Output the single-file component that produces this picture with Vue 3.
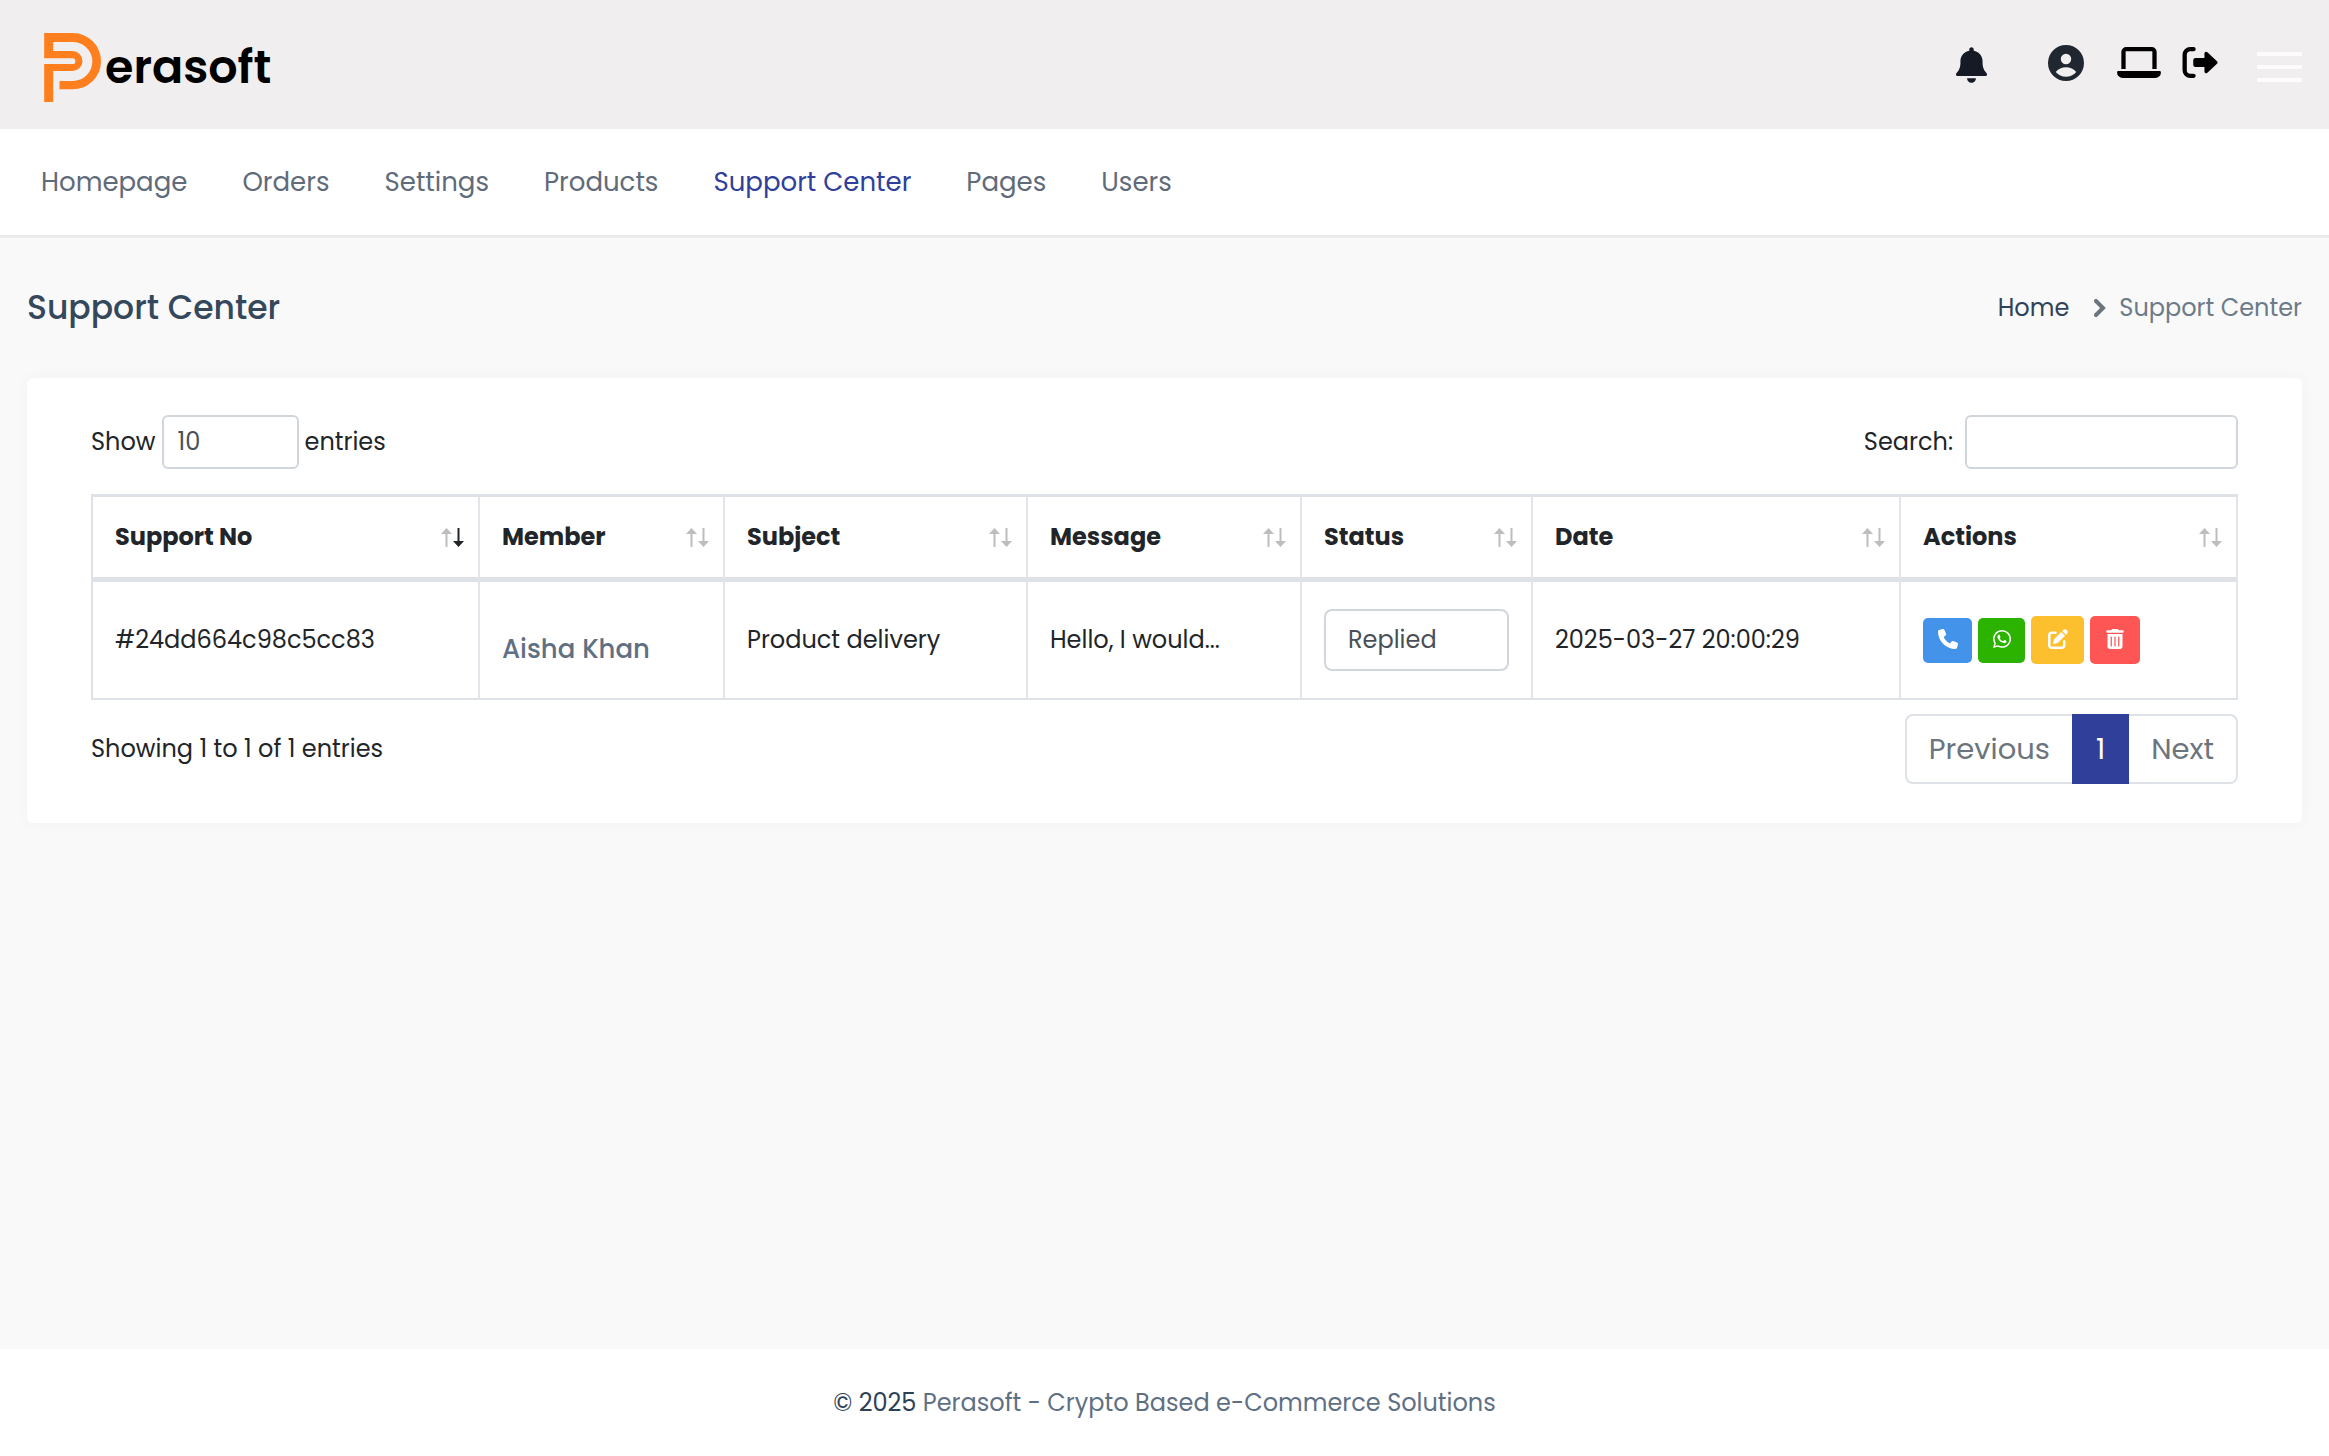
<script setup>
import { ref } from 'vue'

const navItems = ['Homepage', 'Orders', 'Settings', 'Products', 'Support Center', 'Pages', 'Users']
const activeNav = 'Support Center'

const columns = [
  { label: 'Support No', width: 387, sorted: true },
  { label: 'Member', width: 245 },
  { label: 'Subject', width: 303 },
  { label: 'Message', width: 274 },
  { label: 'Status', width: 231 },
  { label: 'Date', width: 368 },
  { label: 'Actions', width: 337 }
]

const tickets = ref([
  {
    no: '#24dd664c98c5cc83',
    member: 'Aisha Khan',
    subject: 'Product delivery',
    message: 'Hello, I would...',
    status: 'Replied',
    date: '2025-03-27 20:00:29'
  }
])

const pageSize = ref('10')
const search = ref('')
</script>

<template>
  <div class="page">
    <header class="topbar">
      <a class="logo" href="#" aria-label="Perasoft">
        <svg class="logo-mark" viewBox="74 69 170 207" aria-hidden="true">
          <path d="M74 69H160A84.500 84.500 0 0 1 160 238H120V213H160A58.500 58.500 0 0 0 160 96H101V123H159A30 30 0 0 1 159 183H101V276H74V162H159A8.500 8.500 0 0 0 159 145H74Z" />
        </svg>
        <span class="logo-text">erasoft</span>
      </a>
      <div class="tools">
        <a class="tool bell" href="#" aria-label="Notifications">
          <svg width="31" height="36" viewBox="0 0 448 512"><path d="M224 0c-17.700 0-32 14.300-32 32V49.900C119.500 61.400 64 124.200 64 200v33.400c0 45.400-15.500 89.500-43.800 124.900L5.300 377c-5.800 7.200-6.900 17.100-2.900 25.400S14.800 416 24 416H424c9.200 0 17.600-5.300 21.600-13.600s2.900-18.200-2.900-25.400l-14.900-18.600C399.500 322.900 384 278.800 384 233.400V200c0-75.800-55.500-138.600-128-150.100V32c0-17.700-14.300-32-32-32zM288 448H160c0 17 6.700 33.300 18.700 45.300s28.300 18.700 45.300 18.700s33.300-6.700 45.300-18.700s18.700-28.300 18.700-45.300z" /></svg>
        </a>
        <a class="tool user" href="#" aria-label="Account">
          <svg width="36" height="36" viewBox="2 2 20 20"><path fill-rule="evenodd" d="M12 2a10 10 0 1 0 0 20a10 10 0 1 0 0-20zM12 6.900a2.900 2.900 0 1 1 0 5.800a2.900 2.900 0 1 1 0-5.800zM6.300 17c1.200-1.800 3.500-2.700 5.700-2.700s4.500.9 5.700 2.700c-1.400 1.700-3.400 2.600-5.700 2.600s-4.300-.9-5.700-2.600z" /></svg>
        </a>
        <a class="tool laptop" href="#" aria-label="View site">
          <svg width="44" height="31" viewBox="0 0 133 94"><path d="M13 67V15A15 15 0 0 1 28 0H105A15 15 0 0 1 120 15V67H107V13H26V67ZM4 73H129Q133 73 133 77A17 17 0 0 1 116 94H17A17 17 0 0 1 0 77Q0 73 4 73Z" /></svg>
        </a>
        <a class="tool" href="#" aria-label="Sign out">
          <svg width="36" height="31" viewBox="0 0 107 94"><path d="M34 6.500H24A17 17 0 0 0 7 23.500V70.500A17 17 0 0 0 24 87.500H34" fill="none" stroke="currentColor" stroke-width="13" stroke-linecap="round" /><path d="M40 33H67V20Q68 11 76 16L105 43Q109 47 105 51L76 78Q68 83 67 74V61H40Q33 61 33 54V40Q33 33 40 33Z" /></svg>
        </a>
        <button class="menu" type="button" aria-label="Menu"><i></i><i></i><i></i></button>
      </div>
    </header>

    <nav class="mainnav">
      <a v-for="item in navItems" :key="item" href="#" :class="{ active: item === activeNav }">{{ item }}</a>
    </nav>

    <main>
      <div class="heading">
        <h1>Support Center</h1>
        <div class="crumbs">
          <a href="#">Home</a>
          <svg width="12" height="18" viewBox="0 0 12 18" aria-hidden="true"><path d="M2 2L9 9L2 16" /></svg>
          <span>Support Center</span>
        </div>
      </div>

      <section class="card">
        <div class="controls">
          <div class="field">
            <label for="size">Show</label>
            <select id="size" v-model="pageSize" class="size">
              <option>10</option>
              <option>25</option>
              <option>50</option>
            </select>
            <label for="size">entries</label>
          </div>
          <div class="field search">
            <label for="search">Search:</label>
            <input id="search" v-model="search" type="search" />
          </div>
        </div>

        <table>
          <colgroup>
            <col v-for="c in columns" :key="c.label" :style="{ width: c.width + 'px' }" />
          </colgroup>
          <thead>
            <tr>
              <th v-for="c in columns" :key="c.label" scope="col">
                <div class="th">
                  {{ c.label }}
                  <svg class="sort" :class="{ sorted: c.sorted }" width="23" height="19" viewBox="0 0 23 19" aria-hidden="true">
                    <path d="M0 6L5.500 0L11 6H6.500V19H4.500V6Z" />
                    <path class="down" d="M12 13H16.500V0H18.500V13H23L17.500 19Z" />
                  </svg>
                </div>
              </th>
            </tr>
          </thead>
          <tbody>
            <tr v-for="t in tickets" :key="t.no">
              <td>{{ t.no }}</td>
              <td><h2 class="member">{{ t.member }}</h2></td>
              <td>{{ t.subject }}</td>
              <td>{{ t.message }}</td>
              <td>
                <select v-model="t.status" class="status" aria-label="Status">
                  <option>Replied</option>
                  <option>Pending</option>
                </select>
              </td>
              <td>{{ t.date }}</td>
              <td>
                <div class="actions">
                  <button class="call" type="button" aria-label="Call">
                    <svg width="20" height="20" viewBox="0 0 512 512"><path d="M164.900 24.600c-7.700-18.600-28-28.500-47.400-23.200l-88 24C12.100 30.200 0 46 0 64C0 311.400 200.600 512 448 512c18 0 33.800-12.100 38.600-29.500l24-88c5.300-19.400-4.600-39.700-23.200-47.400l-96-40c-16.300-6.800-35.200-2.100-46.300 11.600L304.700 368C234.300 334.700 177.300 277.700 144 207.300L193.300 167c13.700-11.200 18.400-30 11.600-46.300l-40-96z" /></svg>
                  </button>
                  <button class="whatsapp" type="button" aria-label="WhatsApp">
                    <svg width="18" height="18" viewBox="0 32 448 448"><path d="M380.900 97.100C339 55.100 283.200 32 223.900 32c-122.400 0-222 99.600-222 222 0 39.100 10.200 77.300 29.600 111L0 480l117.700-30.900c32.400 17.700 68.900 27 106.100 27h.1c122.300 0 224.100-99.600 224.100-222 0-59.300-25.200-115-67.100-157zm-157 341.600c-33.200 0-65.700-8.900-94-25.700l-6.700-4-69.800 18.300L72 359.200l-4.400-7c-18.500-29.400-28.200-63.300-28.200-98.200 0-101.700 82.800-184.500 184.600-184.500 49.300 0 95.600 19.200 130.400 54.100 34.800 34.900 56.200 81.200 56.100 130.500 0 101.800-84.900 184.600-186.600 184.600zm101.200-138.200c-5.500-2.800-32.800-16.200-37.900-18-5.100-1.900-8.800-2.800-12.500 2.800-3.700 5.600-14.300 18-17.600 21.800-3.200 3.700-6.500 4.200-12 1.400-32.600-16.300-54-29.100-75.500-66-5.700-9.800 5.700-9.100 16.300-30.300 1.800-3.700.9-6.900-.5-9.700-1.400-2.800-12.500-30.100-17.100-41.200-4.500-10.800-9.100-9.300-12.500-9.500-3.200-.2-6.900-.2-10.600-.2-3.700 0-9.700 1.400-14.800 6.900-5.100 5.600-19.400 19-19.400 46.300 0 27.300 19.900 53.700 22.600 57.400 2.800 3.700 39.100 59.700 94.800 83.800 35.200 15.200 49 16.500 66.600 13.900 10.700-1.600 32.800-13.400 37.400-26.400 4.600-13 4.600-24.100 3.200-26.400-1.300-2.500-5-3.900-10.500-6.600z" /></svg>
                  </button>
                  <button class="edit" type="button" aria-label="Edit">
                    <svg width="20" height="20" viewBox="0 0 512 512"><path d="M471.600 21.700c-21.900-21.900-57.300-21.900-79.200 0L362.300 51.700l97.900 97.900 30.100-30.100c21.900-21.900 21.900-57.300 0-79.200L471.600 21.700zm-299.200 220c-6.100 6.100-10.800 13.600-13.500 21.900l-29.600 88.800c-2.900 8.600-.6 18.100 5.800 24.600s15.900 8.700 24.600 5.800l88.800-29.600c8.200-2.700 15.700-7.400 21.900-13.500L437.700 172.300 339.700 74.300 172.400 241.700zM96 64C43 64 0 107 0 160V416c0 53 43 96 96 96H352c53 0 96-43 96-96V320c0-17.700-14.300-32-32-32s-32 14.300-32 32v96c0 17.700-14.300 32-32 32H96c-17.700 0-32-14.300-32-32V160c0-17.700 14.300-32 32-32h96c17.700 0 32-14.300 32-32s-14.300-32-32-32H96z" /></svg>
                  </button>
                  <button class="delete" type="button" aria-label="Delete">
                    <svg width="18" height="20" viewBox="0 0 448 512"><path fill-rule="evenodd" d="M135.200 17.700L128 32H32C14.300 32 0 46.300 0 64S14.300 96 32 96H416c17.700 0 32-14.300 32-32s-14.300-32-32-32H320l-7.200-14.300C307.400 6.800 296.300 0 284.200 0H163.800c-12.100 0-23.200 6.800-28.600 17.700zM416 128H32V448c0 35.300 28.700 64 64 64H352c35.300 0 64-28.700 64-64V128zM144 208V432c0 8.800-7.200 16-16 16s-16-7.200-16-16V208c0-8.800 7.200-16 16-16s16 7.200 16 16zm96 0V432c0 8.800-7.200 16-16 16s-16-7.200-16-16V208c0-8.800 7.200-16 16-16s16 7.200 16 16zm96 0V432c0 8.800-7.200 16-16 16s-16-7.200-16-16V208c0-8.800 7.200-16 16-16s16 7.200 16 16z" /></svg>
                  </button>
                </div>
              </td>
            </tr>
          </tbody>
        </table>

        <div class="bottom">
          <p>Showing 1 to 1 of 1 entries</p>
          <div class="pager">
            <button type="button">Previous</button>
            <button type="button" class="current">1</button>
            <button type="button">Next</button>
          </div>
        </div>
      </section>
    </main>

    <footer><span>© 2025</span> Perasoft - Crypto Based e-Commerce Solutions</footer>
  </div>
</template>

<style>
body {
  margin: 0;
}
</style>

<style scoped>
.page {
  display: flex;
  flex-direction: column;
  min-height: 100vh;
  background: #f9f9f9;
  color: #212529;
  font-family: Poppins, Inter, sans-serif;
  font-size: 24px;
  line-height: 36px;
}

.page * {
  box-sizing: border-box;
}

a {
  color: inherit;
  text-decoration: none;
}

button,
input,
select {
  font: inherit;
  margin: 0;
}

svg {
  display: block;
  fill: currentColor;
}

.topbar {
  display: flex;
  align-items: center;
  justify-content: space-between;
  height: 129px;
  padding: 0 27px 0 44px;
  background: #f0eeef;
}

.logo {
  display: flex;
  align-items: center;
  gap: 4px;
  padding-top: 5px;
}

.logo-mark {
  width: 57px;
  height: 69px;
  fill: #ff7f1f;
}

.logo-text {
  color: #000;
  font-size: 46px;
  font-weight: 600;
  line-height: 64px;
}

.tools {
  display: flex;
  align-items: center;
  color: #000;
}

.tool {
  padding-bottom: 4px;
}

.bell {
  margin-right: 61px;
  padding-bottom: 0;
  color: #151a24;
}

.user {
  margin-right: 33px;
  color: #202731;
}

.laptop {
  margin-right: 21px;
}

.menu {
  display: flex;
  flex-direction: column;
  gap: 9px;
  width: 45px;
  margin-left: 39px;
  padding: 4px 0 0;
  border: 0;
  background: none;
}

.menu i {
  height: 4px;
  background: #fcfcfc;
}

.mainnav {
  display: flex;
  align-items: center;
  gap: 55px;
  height: 109px;
  padding: 0 41px;
  border-bottom: 3px solid #ebebeb;
  background: #fff;
  color: #5f6b7a;
  font-size: 26px;
}

.mainnav .active {
  color: #2f3f9b;
}

main {
  flex: 1;
  padding: 0 27px;
}

.heading {
  display: flex;
  align-items: center;
  justify-content: space-between;
  height: 140px;
}

h1 {
  margin: 0;
  color: #34475b;
  font-size: 33px;
  font-weight: 500;
}

.crumbs {
  display: flex;
  align-items: center;
  color: #6d7a88;
}

.crumbs a {
  color: #2f4358;
}

.crumbs svg {
  margin: 0 13px 0 25px;
  fill: none;
  stroke: #6c757d;
  stroke-width: 4;
  stroke-linecap: round;
}

.card {
  padding: 37px 64px 39px;
  border-radius: 6px;
  background: #fff;
  box-shadow: 0 0 20px rgba(0, 0, 0, 0.03);
}

.controls,
.bottom {
  display: flex;
  align-items: center;
  justify-content: space-between;
}

.field {
  display: flex;
  align-items: center;
  gap: 6px;
}

.search {
  gap: 12px;
}

.field select,
.field input {
  appearance: none;
  height: 54px;
  padding: 0 14px;
  border: 2px solid #d1d6dc;
  border-radius: 6px;
  background: #fff;
  color: #495057;
}

.size {
  width: 137px;
}

.field input {
  width: 273px;
}

table {
  width: 100%;
  margin-top: 25px;
  table-layout: fixed;
  border: 2px solid #dee2e6;
  border-top-width: 3px;
  border-right: 0;
  border-spacing: 0;
}

th,
td {
  padding: 0 22px;
  border-right: 2px solid #e2e6ea;
  text-align: left;
  white-space: nowrap;
}

th {
  height: 85px;
  padding-right: 14px;
  border-bottom: 5px solid #dee2e6;
  font-weight: 700;
}

.th {
  display: flex;
  align-items: center;
  justify-content: space-between;
}

.sort {
  fill: #bdbdbd;
}

.sorted .down {
  fill: #212529;
}

td {
  height: 116px;
}

.member {
  margin: 0;
  padding-top: 18px;
  color: #607083;
  font-size: 26px;
  font-weight: 500;
}

.status {
  appearance: none;
  width: 100%;
  height: 62px;
  padding: 0 22px;
  border: 2px solid #d1d6dc;
  border-radius: 8px;
  background: #fff;
  color: #495057;
}

.actions {
  display: flex;
  align-items: center;
  gap: 6px;
}

.actions button {
  display: flex;
  align-items: center;
  justify-content: center;
  height: 48px;
  padding: 0 0 2px;
  border: 0;
  border-radius: 5px;
  color: #fff;
}

.actions .call {
  width: 49px;
  height: 45px;
  background: #4393ea;
}

.actions .whatsapp {
  width: 47px;
  height: 45px;
  background: #2cb300;
}

.actions .edit {
  width: 53px;
  background: #fcbf2e;
}

.actions .delete {
  width: 50px;
  background: #fe5555;
}

.bottom {
  margin-top: 14px;
}

.bottom p {
  margin: 0;
}

.pager {
  display: flex;
}

.pager button {
  height: 70px;
  padding: 0 22px;
  border: 2px solid #dee2e6;
  background: #fff;
  color: #6c757d;
  font-size: 29px;
}

.pager button:first-child {
  border-right: 0;
  border-radius: 8px 0 0 8px;
}

.pager button:last-child {
  border-left: 0;
  border-radius: 0 8px 8px 0;
}

.pager .current {
  border-color: #303f9a;
  background: #303f9a;
  color: #fff;
}

footer {
  padding: 36px 36px 35px;
  background: #fff;
  color: #5f7084;
  text-align: center;
}

footer span {
  color: #2d4156;
}
</style>
